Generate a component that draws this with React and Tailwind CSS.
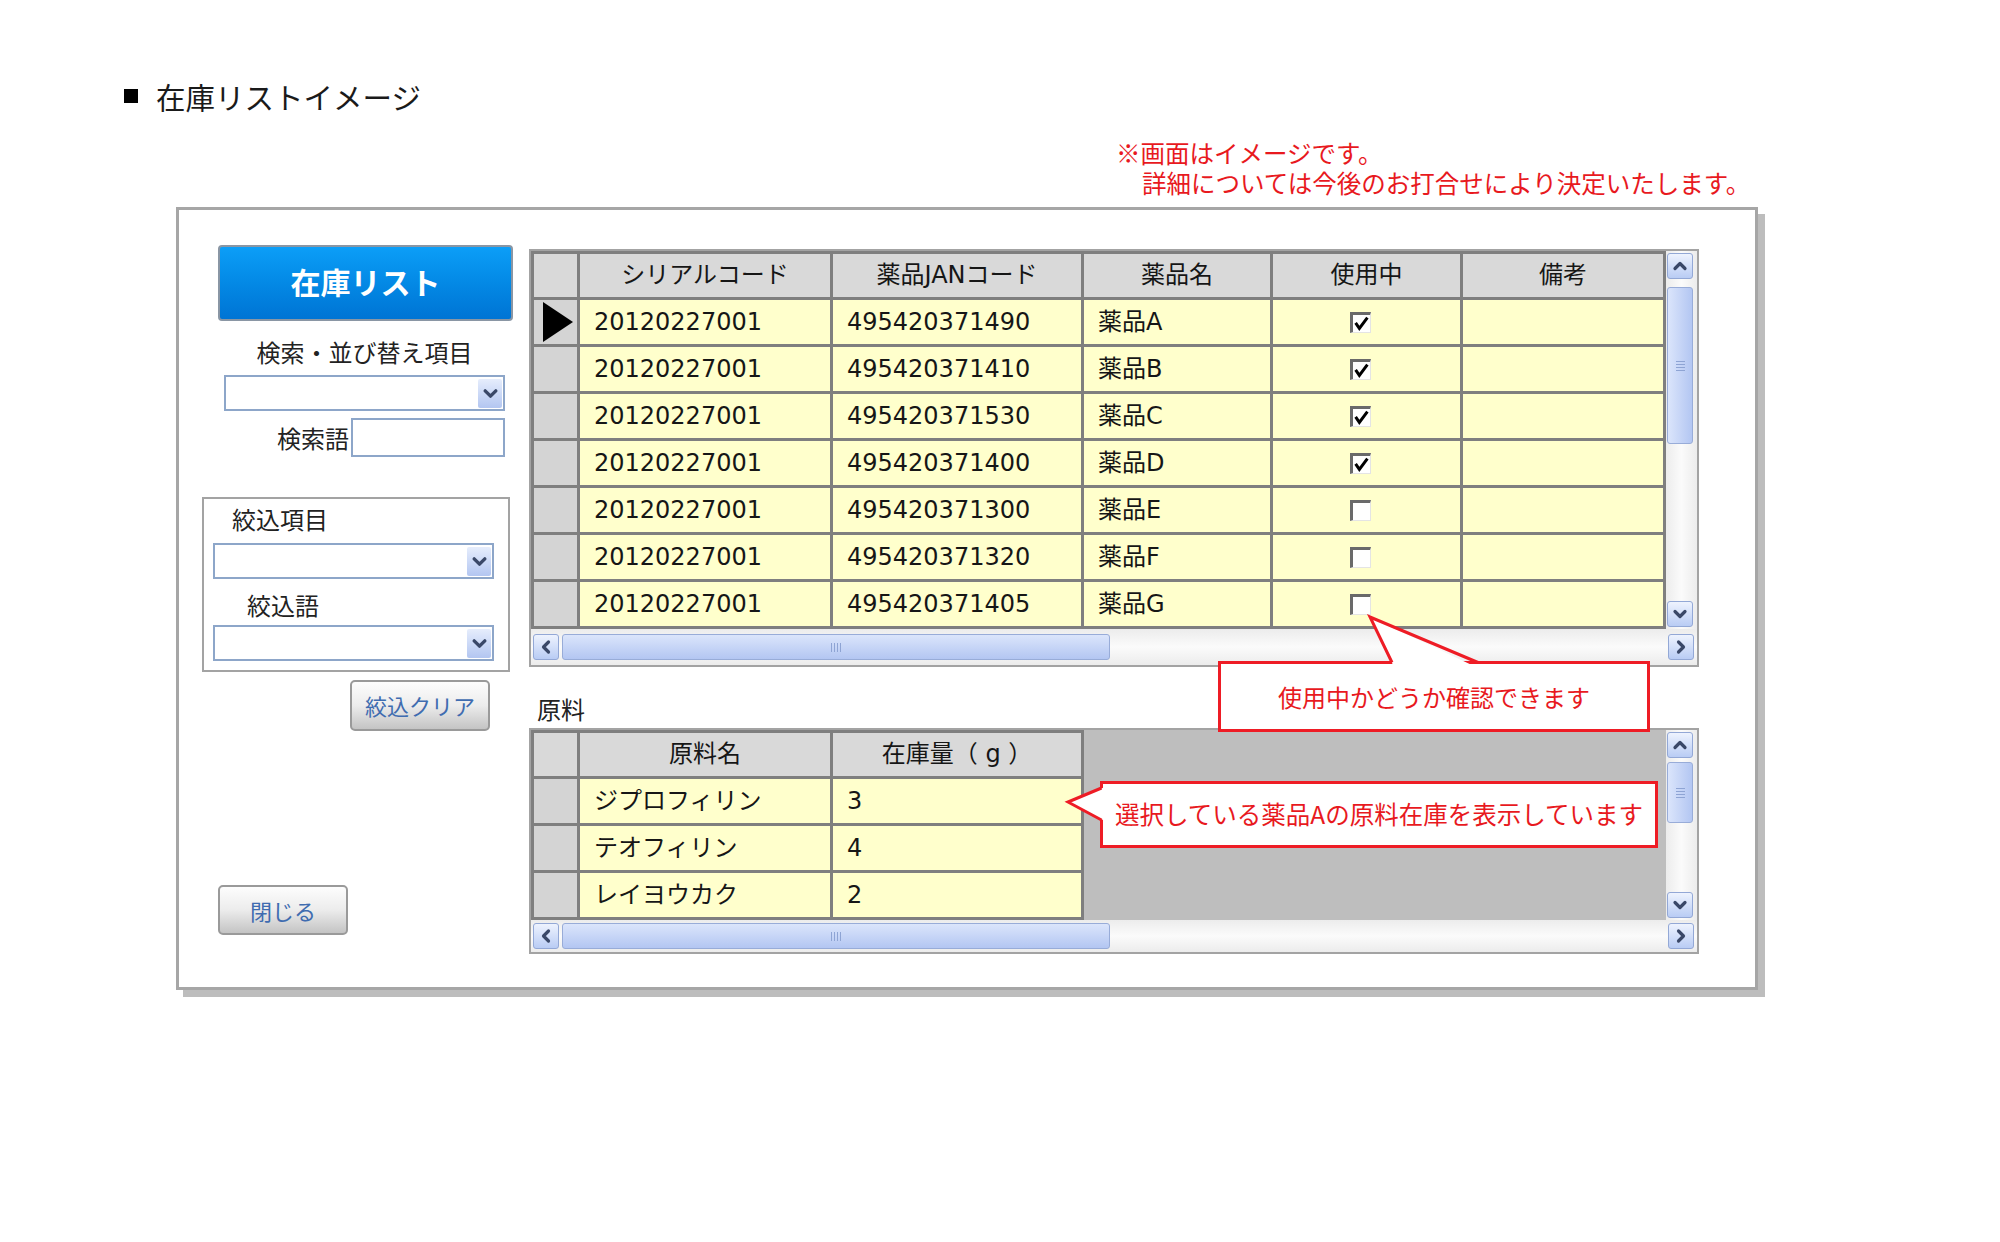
import React from "react";

const jp = "font-['Noto_Sans_CJK_JP',sans-serif]";
const mix = "font-['DejaVu_Sans','Noto_Sans_CJK_JP',sans-serif]";

function Chevron({ dir, size = 16, color = "#3a4868" }) {
  const paths = {
    up: "M3 10.5 L8 5.5 L13 10.5",
    down: "M3 5.5 L8 10.5 L13 5.5",
    left: "M10.5 3 L5.5 8 L10.5 13",
    right: "M5.5 3 L10.5 8 L5.5 13",
  };
  return (
    <svg width={size} height={size} viewBox="0 0 16 16">
      <path d={paths[dir]} fill="none" stroke={color} strokeWidth="3.2" strokeLinecap="round" strokeLinejoin="round" />
    </svg>
  );
}

function ScrollButton({ dir }) {
  return (
    <div className="w-[26px] h-[26px] shrink-0 rounded-[3px] border border-[#93a8d6] bg-linear-to-b from-[#eef3fe] to-[#b9ccf4] flex items-center justify-center">
      <Chevron dir={dir} />
    </div>
  );
}

function VThumb({ h }) {
  return (
    <div
      className="w-[26px] rounded-[3px] border border-[#98acd8] bg-linear-to-r from-[#dbe5fb] to-[#b3c6f2] flex items-center justify-center"
      style={{ height: h }}
    >
      <div className="flex flex-col gap-[2px]">
        <div className="w-[9px] h-[1px] bg-[#8ea4d4]" />
        <div className="w-[9px] h-[1px] bg-[#8ea4d4]" />
        <div className="w-[9px] h-[1px] bg-[#8ea4d4]" />
        <div className="w-[9px] h-[1px] bg-[#8ea4d4]" />
      </div>
    </div>
  );
}

function VScroll({ thumbTop, thumbH }) {
  return (
    <div className="w-[31px] flex flex-col items-start pl-[1px] py-[2px] bg-linear-to-r from-[#ececec] via-[#fbfbfb] to-[#ececec]">
      <ScrollButton dir="up" />
      <div style={{ marginTop: thumbTop }}>
        <VThumb h={thumbH} />
      </div>
      <div className="flex-1" />
      <ScrollButton dir="down" />
    </div>
  );
}

function HScroll({ hClass }) {
  return (
    <div className={"flex items-center pl-[2px] pr-[3px] bg-linear-to-b from-[#ececec] via-[#fbfbfb] to-[#ececec] " + hClass}>
      <ScrollButton dir="left" />
      <div className="ml-[3px] w-[548px] h-[26px] rounded-[3px] border border-[#98acd8] bg-linear-to-b from-[#dbe5fb] to-[#b3c6f2] flex items-center justify-center">
        <div className="flex gap-[2px]">
          <div className="w-[1px] h-[9px] bg-[#8ea4d4]" />
          <div className="w-[1px] h-[9px] bg-[#8ea4d4]" />
          <div className="w-[1px] h-[9px] bg-[#8ea4d4]" />
          <div className="w-[1px] h-[9px] bg-[#8ea4d4]" />
        </div>
      </div>
      <div className="flex-1" />
      <ScrollButton dir="right" />
    </div>
  );
}

function Checkbox({ checked }) {
  return (
    <div className="w-[21px] h-[21px] border-t-[3px] border-l-[3px] border-b border-r border-t-[#6a6a6a] border-l-[#6a6a6a] border-b-[#e4e4e4] border-r-[#e4e4e4] bg-white flex items-center justify-center">
      {checked && (
        <svg width="15" height="15" viewBox="0 0 14 14">
          <path d="M1.5 6.5 L5 11.5 L12.5 1.5" fill="none" stroke="#000" strokeWidth="2.8" />
        </svg>
      )}
    </div>
  );
}

function Select({ className }) {
  return (
    <div className={"h-[36px] w-[281px] border-2 border-[#8da6c9] bg-white flex items-center justify-end pr-[1px] " + className}>
      <div className="w-[24px] h-[29px] rounded-[2px] bg-linear-to-b from-[#e6edfc] to-[#b3c6f1] flex items-center justify-center">
        <Chevron dir="down" size={17} />
      </div>
    </div>
  );
}

const mainRows = [
  ["20120227001", "495420371490", "薬品A", true],
  ["20120227001", "495420371410", "薬品B", true],
  ["20120227001", "495420371530", "薬品C", true],
  ["20120227001", "495420371400", "薬品D", true],
  ["20120227001", "495420371300", "薬品E", false],
  ["20120227001", "495420371320", "薬品F", false],
  ["20120227001", "495420371405", "薬品G", false],
];

const subRows = [
  ["ジプロフィリン", "3"],
  ["テオフィリン", "4"],
  ["レイヨウカク", "2"],
];

function MainGrid() {
  const headers = ["シリアルコード", "薬品JANコード", "薬品名", "使用中", "備考"];
  return (
    <div className="w-[1170px] border-2 border-[#a3a3a3] bg-[#f4f4f4]">
      <div className="flex">
        <div className={"grid grid-cols-[43px_250px_248px_186px_187px_200px] gap-[3px] p-[3px] bg-[#7f7f7f] text-[24px] text-[#161616] " + mix}>
          <div className="h-[43px] bg-[#d9d9d9]" />
          {headers.map((h) => (
            <div key={h} className="h-[43px] bg-[#d9d9d9] text-center leading-[43px]">
              {h}
            </div>
          ))}
          {mainRows.map((r, i) => (
            <React.Fragment key={i}>
              <div className="h-[44px] bg-[#d4d4d4] flex items-center pl-[9px]">
                {i === 0 && (
                  <svg width="30" height="40" viewBox="0 0 30 40">
                    <polygon points="0,0 30,20 0,40" fill="#000" />
                  </svg>
                )}
              </div>
              <div className="h-[44px] bg-[#ffffcc] pl-[14px] leading-[44px]">{r[0]}</div>
              <div className="h-[44px] bg-[#ffffcc] pl-[14px] leading-[44px]">{r[1]}</div>
              <div className="h-[44px] bg-[#ffffcc] pl-[14px] leading-[44px]">{r[2]}</div>
              <div className="h-[44px] bg-[#ffffcc] flex items-center justify-center pr-[12px]">
                <Checkbox checked={r[3]} />
              </div>
              <div className="h-[44px] bg-[#ffffcc]" />
            </React.Fragment>
          ))}
        </div>
        <VScroll thumbTop={8} thumbH={157} />
      </div>
      <HScroll hClass="h-[36px]" />
    </div>
  );
}

function SubGrid() {
  return (
    <div className="w-[1170px] border-2 border-[#a3a3a3] bg-[#f4f4f4]">
      <div className="flex">
        <div className={"grid grid-cols-[43px_250px_248px] gap-[3px] p-[3px] bg-[#7f7f7f] text-[24px] text-[#161616] " + mix}>
          <div className="h-[43px] bg-[#d9d9d9]" />
          <div className="h-[43px] bg-[#d9d9d9] text-center leading-[43px]">原料名</div>
          <div className="h-[43px] bg-[#d9d9d9] text-center leading-[43px] whitespace-pre">在庫量（ g ）</div>
          {subRows.map((r, i) => (
            <React.Fragment key={i}>
              <div className="h-[44px] bg-[#d4d4d4]" />
              <div className="h-[44px] bg-[#ffffcc] pl-[14px] leading-[44px]">{r[0]}</div>
              <div className="h-[44px] bg-[#ffffcc] pl-[14px] leading-[44px]">{r[1]}</div>
            </React.Fragment>
          ))}
        </div>
        <div className="flex-1 bg-[#bebebe]" />
        <VScroll thumbTop={4} thumbH={61} />
      </div>
      <HScroll hClass="h-[32px]" />
    </div>
  );
}

function GrayButton({ className, children }) {
  return (
    <div
      className={
        "rounded-[5px] border-2 border-[#9a9a9a] bg-linear-to-b from-[#fdfdfd] via-[#ececec] to-[#c4c4c4] flex items-center justify-center text-[22px] text-[#3f6cb0] " +
        jp +
        " " +
        className
      }
    >
      {children}
    </div>
  );
}

export default function App() {
  return (
    <div className={"relative w-[2000px] h-[1242px] bg-white overflow-hidden text-[#1a1a1a] " + jp}>
      <div className="pl-[124px] pt-[78px] flex items-center gap-[18px] h-[114px]">
        <div className="w-[14px] h-[14px] bg-black" />
        <span className="text-[29.5px] leading-[36px]">在庫リストイメージ</span>
      </div>

      <div className="mt-[24px] pl-[1116px] text-[24.5px] leading-[30px] text-[#e8191e]">
        <div>※画面はイメージです。</div>
        <div className="pl-[26px]">詳細については今後のお打合せにより決定いたします。</div>
      </div>

      <div className="mt-[9px] ml-[176px] w-[1582px] h-[783px] border-[3px] border-[#a6a6a6] bg-white shadow-[7px_7px_0_0_#bdbdbd] flex">
        <div className="ml-[23px] w-[311px] pt-[35px] flex flex-col items-start text-[24px] text-[#222]">
          <div className="ml-[16px] w-[295px] h-[76px] pb-[4px] rounded-[4px] border-2 border-[#8a96a4] bg-linear-to-b from-[#0c9ef7] to-[#0074d4] flex items-center justify-center text-white font-bold text-[30px]">
            在庫リスト
          </div>
          <div className="mt-[16px] ml-[22px] w-[281px] text-center leading-[30px]">検索・並び替え項目</div>
          <Select className="mt-[8px] ml-[22px]" />
          <div className="mt-[7px] ml-[22px] w-[281px] flex justify-end items-center">
            <span className="leading-[30px] mr-[2px]">検索語</span>
            <div className="w-[154px] h-[39px] border-2 border-[#8da6c9] bg-white" />
          </div>
          <div className="mt-[40px] w-[308px] h-[175px] border-2 border-[#a3a3a3] flex flex-col items-start">
            <div className="mt-[5px] pl-[28px] leading-[30px]">絞込項目</div>
            <Select className="mt-[9px] ml-[9px]" />
            <div className="mt-[11px] pl-[43px] leading-[30px]">絞込語</div>
            <Select className="mt-[5px] ml-[9px]" />
          </div>
          <GrayButton className="mt-[8px] ml-[148px] w-[140px] h-[51px]">絞込クリア</GrayButton>
          <GrayButton className="mt-[154px] ml-[16px] w-[130px] h-[50px]">閉じる</GrayButton>
        </div>

        <div className="ml-[16px] pt-[39px] flex flex-col">
          <MainGrid />
          <div className="mt-[27px] h-[30px] leading-[30px] pl-[8px] text-[24px] text-[#222]">原料</div>
          <div className="mt-[4px]">
            <SubGrid />
          </div>
        </div>
      </div>

      {/* Callout 1 */}
      <div className="absolute left-[1218px] top-[661px] w-[432px] h-[71px] border-[3px] border-[#ee1c25] bg-white flex items-center justify-center text-[24px] text-[#e8191e]">
        使用中かどうか確認できます
      </div>
      <svg className="absolute left-[1360px] top-[610px]" width="130" height="60" viewBox="0 0 130 60">
        <polygon points="10,7 34,57 116,57" fill="#fff" />
        <polyline points="32,52.5 10,7 118,52.5" fill="none" stroke="#ee1c25" strokeWidth="3" strokeLinejoin="miter" />
      </svg>

      {/* Callout 2 */}
      <div className="absolute left-[1100px] top-[781px] w-[558px] h-[67px] border-[3px] border-[#ee1c25] bg-white flex items-center justify-center text-[24.5px] text-[#e8191e]">
        選択している薬品Aの原料在庫を表示しています
      </div>
      <svg className="absolute left-[1060px] top-[780px]" width="50" height="50" viewBox="0 0 50 50">
        <polygon points="8,22 45,7 45,41" fill="#fff" />
        <polyline points="41.5,8 8,22 41.5,40" fill="none" stroke="#ee1c25" strokeWidth="3" strokeLinejoin="miter" />
      </svg>
    </div>
  );
}
